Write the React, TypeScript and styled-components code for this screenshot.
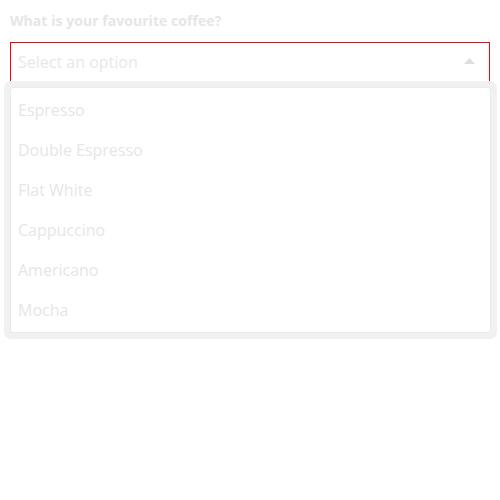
import React from "react";
import styled, { createGlobalStyle } from "styled-components";

const Global = createGlobalStyle`
  html, body, #root { height: 100%; }
  body { margin: 0; background: #fff; font-family: "Open Sans", "Noto Sans", sans-serif; }
`;

const Field = styled.div`
  box-sizing: border-box;
  min-height: 100%;
  padding: 10px;
  display: flex;
  flex-direction: column;
`;

const Label = styled.label`
  font-size: 14px;
  font-weight: 700;
  line-height: 22px;
  letter-spacing: 0.05px;
  color: #e6e6e6;
  margin-bottom: 10px;
`;

const SelectBox = styled.div`
  position: relative;
  height: 40px;
  box-sizing: border-box;
  border: 1px solid #ff0000;
  display: flex;
  align-items: center;
  padding: 0 14px 0 7px;
`;

const Placeholder = styled.span`
  flex: 1;
  font-size: 16px;
  color: #e8e8e8;
`;

const Arrow = styled.svg`
  width: 11px;
  height: 6px;
  margin-bottom: 2px;
`;

const Menu = styled.div`
  position: absolute;
  top: 38px;
  left: -7px;
  right: -8px;
  padding: 6px;
  background: #f1f1f1;
  border-radius: 7px;
`;

const Panel = styled.ul`
  list-style: none;
  margin: 0;
  padding: 2px 0;
  background: #fff;
  border: 1px solid #ebebeb;
  border-radius: 3px;
`;

const OptionItem = styled.li`
  height: 40px;
  display: flex;
  align-items: center;
  padding-left: 7px;
  font-size: 16px;
  color: #e6e6e6;
`;

const options = ["Espresso", "Double Espresso", "Flat White", "Cappuccino", "Americano", "Mocha"];

export default function App() {
  return (
    <>
      <Global />
      <Field>
        <Label>What is your favourite coffee?</Label>
        <SelectBox>
          <Placeholder>Select an option</Placeholder>
          <Arrow viewBox="0 0 11 6">
            <path d="M0 6 L5.5 0 L11 6 Z" fill="#dedede" />
          </Arrow>
          <Menu>
            <Panel>
              {options.map((o) => (
                <OptionItem key={o}>{o}</OptionItem>
              ))}
            </Panel>
          </Menu>
        </SelectBox>
      </Field>
    </>
  );
}
